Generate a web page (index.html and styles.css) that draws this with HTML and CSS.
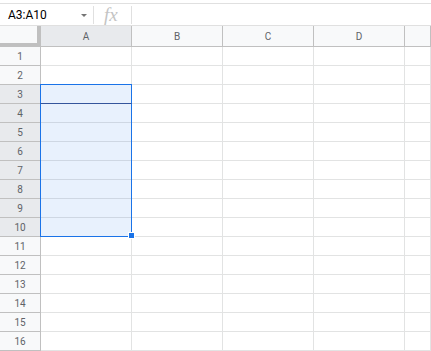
FILE: index.html
```html
<!DOCTYPE html>
<html lang="en">
<head>
    <meta charset="UTF-8">
    <meta name="viewport" content="width=device-width, initial-scale=1.0">
    <title>Sheet</title>
    <link rel="stylesheet" href="styles.css">
</head>
<body>
    <div class="formula-bar">
        <div class="name-box">
            <span class="range">A3:A10</span>
            <span class="caret"></span>
        </div>
        <div class="divider"></div>
        <div class="fx">fx</div>
        <div class="divider"></div>
    </div>
    <div class="sheet-wrap">
        <div class="sheet" id="sheet">
            <div class="corner"></div>
            <div class="col-head selected">A</div>
            <div class="col-head">B</div>
            <div class="col-head">C</div>
            <div class="col-head">D</div>
            <div class="col-head"></div>
        </div>
        <div class="selection"></div>
        <div class="active-cell"></div>
        <div class="fill-handle"></div>
    </div>
    <script>
        const sheet = document.getElementById('sheet');
        for (let r = 1; r <= 16; r++) {
            const head = document.createElement('div');
            head.className = 'row-head' + (r >= 3 && r <= 10 ? ' selected' : '');
            head.textContent = r;
            sheet.appendChild(head);
            for (let c = 0; c < 5; c++) {
                const cell = document.createElement('div');
                cell.className = 'cell';
                sheet.appendChild(cell);
            }
        }
    </script>
</body>
</html>
```
FILE: styles.css
```css
body {
    margin: 0;
    padding: 3px 0 0;
    background-color: #fff;
    font-family: Roboto, 'Liberation Sans', Arial, sans-serif;
    overflow: hidden;
}
.formula-bar {
    display: flex;
    align-items: center;
    height: 21px;
    border-top: 1px solid #e0e0e0;
    border-bottom: 1px solid #e0e0e0;
}
.name-box {
    display: flex;
    align-items: center;
    width: 93px;
    box-sizing: border-box;
    padding-left: 8px;
}
.range {
    font-size: 12px;
    color: #000;
    flex: 1;
}
.caret {
    width: 0;
    height: 0;
    border-left: 3px solid transparent;
    border-right: 3px solid transparent;
    border-top: 3px solid #757575;
    margin-right: 6px;
    margin-top: 1px;
}
.divider {
    width: 1px;
    height: 18px;
    background-color: #e0e0e0;
}
.fx {
    width: 37px;
    box-sizing: border-box;
    padding-left: 10px;
    font-family: 'Liberation Serif', 'DejaVu Serif', serif;
    font-style: italic;
    font-size: 19px;
    color: #c4c4c4;
    line-height: 20px;
}
.sheet-wrap {
    position: relative;
    overflow: hidden;
}
.sheet {
    display: grid;
    grid-template-columns: 41px 91px 91px 91px 91px 1fr;
    grid-template-rows: 21px;
    grid-auto-rows: 19px;
}
.corner {
    background-color: #f8f9fa;
    border-right: 4px solid #c0c0c0;
    border-bottom: 4px solid #c0c0c0;
}
.col-head,
.row-head {
    box-sizing: border-box;
    background-color: #f8f9fa;
    border-right: 1px solid #c0c0c0;
    border-bottom: 1px solid #c0c0c0;
    color: #5f6368;
    font-size: 10px;
    display: flex;
    align-items: center;
    justify-content: center;
    padding-top: 1px;
}
.selected {
    background-color: #e8eaed;
}
.cell {
    box-sizing: border-box;
    border-right: 1px solid #e2e3e3;
    border-bottom: 1px solid #e2e3e3;
}
.selection {
    position: absolute;
    left: 40px;
    top: 58px;
    width: 92px;
    height: 153px;
    box-sizing: border-box;
    border: 1px solid #1a73e8;
    background-color: rgba(26, 115, 232, 0.1);
}
.active-cell {
    position: absolute;
    left: 40px;
    top: 58px;
    width: 92px;
    height: 20px;
    box-sizing: border-box;
    border: 1px solid #1a73e8;
    border-bottom-color: #34559c;
}
.fill-handle {
    position: absolute;
    left: 128px;
    top: 206px;
    width: 5px;
    height: 5px;
    background-color: #1a73e8;
    border: 1px solid #fff;
}
```
